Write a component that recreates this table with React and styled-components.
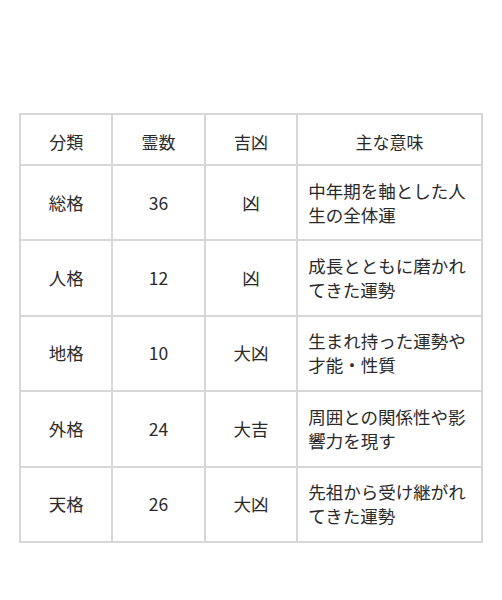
import React from "react";
import styled, { createGlobalStyle } from "styled-components";

const GlobalStyle = createGlobalStyle`
  html, body {
    margin: 0;
    padding: 0;
    background: #ffffff;
  }
  body {
    font-family: "Noto Sans CJK JP", "Noto Sans", sans-serif;
    color: #2a2a2a;
  }
`;

const Page = styled.div`
  width: 502px;
  height: 600px;
  padding: 113px 19px 0 19px;
  box-sizing: border-box;
`;

const Table = styled.table`
  width: 464px;
  border-collapse: collapse;
  table-layout: fixed;
  border: 2px solid #d7d7d7;
`;

const HeadCell = styled.th`
  height: 51px;
  padding: 3px 0 0 0;
  border: 2px solid #d7d7d7;
  font-size: 17px;
  font-weight: 400;
  text-align: center;
  vertical-align: middle;
  box-sizing: border-box;
  width: ${(p) => (p.$wide ? "40%" : "20%")};
`;

const Cell = styled.td`
  height: 75.4px;
  padding: 0 ${(p) => (p.$text ? "8px 0 10px" : "0")};
  border: 2px solid #d7d7d7;
  font-size: 17.5px;
  line-height: 24px;
  text-align: ${(p) => (p.$text ? "left" : "center")};
  vertical-align: middle;
  box-sizing: border-box;
  word-break: break-all;
`;

const rows = [
  ["総格", "36", "凶", "中年期を軸とした人生の全体運"],
  ["人格", "12", "凶", "成長とともに磨かれてきた運勢"],
  ["地格", "10", "大凶", "生まれ持った運勢や才能・性質"],
  ["外格", "24", "大吉", "周囲との関係性や影響力を現す"],
  ["天格", "26", "大凶", "先祖から受け継がれてきた運勢"],
];

export default function App() {
  return (
    <>
      <GlobalStyle />
      <Page>
        <Table>
          <thead>
            <tr>
              <HeadCell>分類</HeadCell>
              <HeadCell>霊数</HeadCell>
              <HeadCell>吉凶</HeadCell>
              <HeadCell $wide>主な意味</HeadCell>
            </tr>
          </thead>
          <tbody>
            {rows.map((r) => (
              <tr key={r[0]}>
                <Cell>{r[0]}</Cell>
                <Cell>{r[1]}</Cell>
                <Cell>{r[2]}</Cell>
                <Cell $text>{r[3]}</Cell>
              </tr>
            ))}
          </tbody>
        </Table>
      </Page>
    </>
  );
}
